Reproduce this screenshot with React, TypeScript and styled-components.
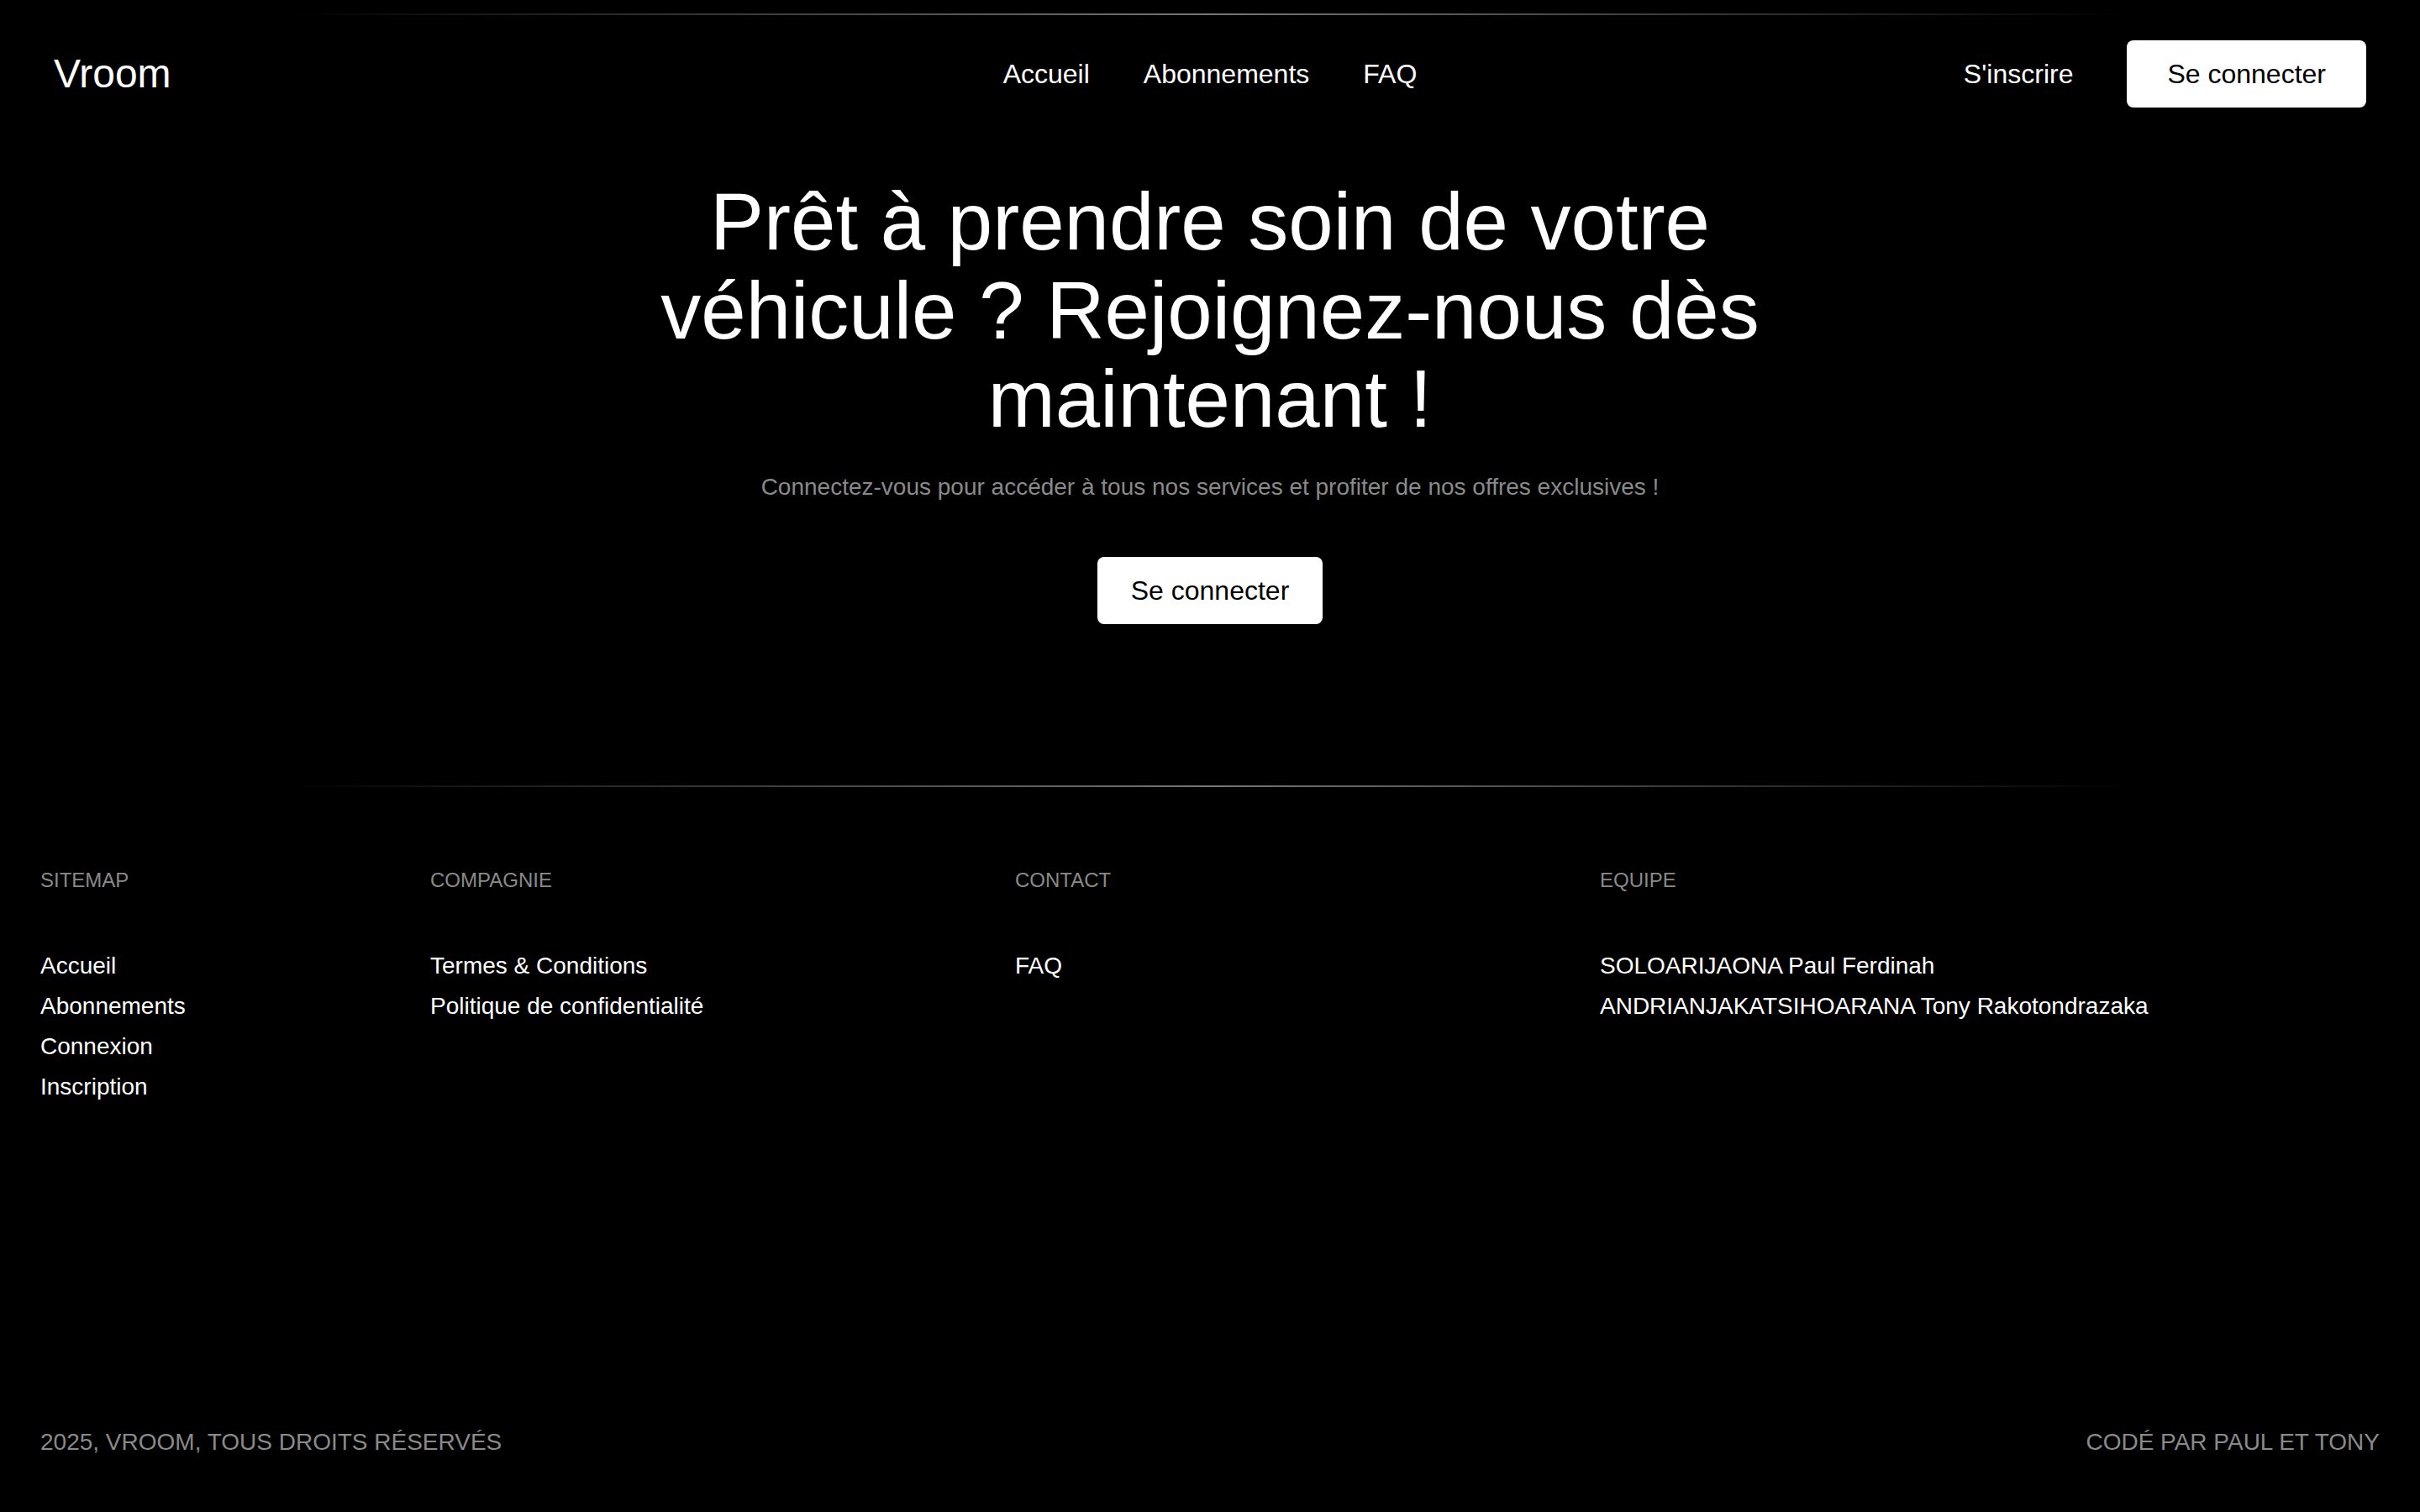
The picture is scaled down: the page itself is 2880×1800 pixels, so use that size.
import { FC } from "react";
import styled, { createGlobalStyle } from "styled-components";

const color = {
  black: "#000000",
  white: "#ffffff",
  gray: "#8a8a8a",
  line: "#777777",
};

const GlobalStyle = createGlobalStyle({
  "*": { boxSizing: "border-box" },
  body: {
    margin: 0,
    backgroundColor: color.black,
    color: color.white,
    fontFamily: '"Liberation Sans", Arial, Helvetica, sans-serif',
  },
});

const Page = styled.div({
  minHeight: "100vh",
  backgroundColor: color.black,
  display: "flex",
  flexDirection: "column",
});

const Divider = styled.div<{ $top: number }>(({ $top }) => ({
  width: "76%",
  height: "2px",
  margin: `${$top}px auto 0`,
  background: `linear-gradient(to right, transparent, ${color.line} 50%, transparent)`,
}));

const Header = styled.header({
  display: "grid",
  gridTemplateColumns: "1fr auto 1fr",
  alignItems: "center",
  padding: "30px 64px",
});

const Logo = styled.a({
  fontSize: "48px",
  lineHeight: 1,
  color: color.white,
  textDecoration: "none",
  justifySelf: "start",
});

const Nav = styled.nav({
  display: "flex",
  gap: "64px",
});

const NavLink = styled.a({
  fontSize: "32px",
  lineHeight: "48px",
  color: color.white,
  textDecoration: "none",
});

const Actions = styled.div({
  justifySelf: "end",
  display: "flex",
  alignItems: "center",
  gap: "64px",
});

const Button = styled.button<{ $px: number }>(({ $px }) => ({
  fontFamily: "inherit",
  fontSize: "32px",
  lineHeight: "48px",
  padding: `16px ${$px}px`,
  backgroundColor: color.white,
  color: color.black,
  border: "none",
  borderRadius: "8px",
  cursor: "pointer",
}));

const Hero = styled.section({
  display: "flex",
  flexDirection: "column",
  alignItems: "center",
  paddingTop: "53px",
  textAlign: "center",
});

const Title = styled.h1({
  margin: 0,
  maxWidth: "1400px",
  fontSize: "96px",
  lineHeight: 1.1,
  fontWeight: 400,
});

const Subtitle = styled.p({
  margin: "32px 0 0",
  fontSize: "28px",
  lineHeight: "40px",
  color: color.gray,
});

const HeroAction = styled.div({
  marginTop: "63px",
});

const Footer = styled.footer({
  display: "flex",
  flexDirection: "column",
  padding: "95px 48px 63px",
});

const Columns = styled.div({
  display: "grid",
  gridTemplateColumns: "2fr 3fr 3fr 4fr",
});

const ColumnTitle = styled.h4({
  margin: 0,
  fontSize: "24px",
  lineHeight: "32px",
  fontWeight: 400,
  textTransform: "uppercase",
  color: color.gray,
});

const LinkList = styled.ul({
  listStyle: "none",
  margin: "62px 0 0",
  padding: 0,
});

const FooterLink = styled.li({
  fontSize: "28px",
  lineHeight: "48px",
  color: color.white,
});

const BottomRow = styled.div({
  marginTop: "379px",
  display: "flex",
  justifyContent: "space-between",
  fontSize: "28px",
  lineHeight: "40px",
  textTransform: "uppercase",
  color: color.gray,
});

const columns = [
  { title: "Sitemap", links: ["Accueil", "Abonnements", "Connexion", "Inscription"] },
  { title: "Compagnie", links: ["Termes & Conditions", "Politique de confidentialité"] },
  { title: "Contact", links: ["FAQ"] },
  {
    title: "Equipe",
    links: ["SOLOARIJAONA Paul Ferdinah", "ANDRIANJAKATSIHOARANA Tony Rakotondrazaka"],
  },
];

const App: FC = () => (
  <>
    <GlobalStyle />
    <Page>
      <Divider $top={16} />
      <Header>
        <Logo href="#">Vroom</Logo>
        <Nav>
          <NavLink href="#">Accueil</NavLink>
          <NavLink href="#">Abonnements</NavLink>
          <NavLink href="#">FAQ</NavLink>
        </Nav>
        <Actions>
          <NavLink href="#">S'inscrire</NavLink>
          <Button $px={48}>Se connecter</Button>
        </Actions>
      </Header>

      <Hero>
        <Title>Prêt à prendre soin de votre véhicule ? Rejoignez-nous dès maintenant !</Title>
        <Subtitle>
          Connectez-vous pour accéder à tous nos services et profiter de nos offres exclusives !
        </Subtitle>
        <HeroAction>
          <Button $px={40}>Se connecter</Button>
        </HeroAction>
      </Hero>

      <Divider $top={192} />
      <Footer>
        <Columns>
          {columns.map((col) => (
            <div key={col.title}>
              <ColumnTitle>{col.title}</ColumnTitle>
              <LinkList>
                {col.links.map((link) => (
                  <FooterLink key={link}>{link}</FooterLink>
                ))}
              </LinkList>
            </div>
          ))}
        </Columns>
        <BottomRow>
          <span>2025, Vroom, tous droits réservés</span>
          <span>Codé par Paul et Tony</span>
        </BottomRow>
      </Footer>
    </Page>
  </>
);

export default App;
